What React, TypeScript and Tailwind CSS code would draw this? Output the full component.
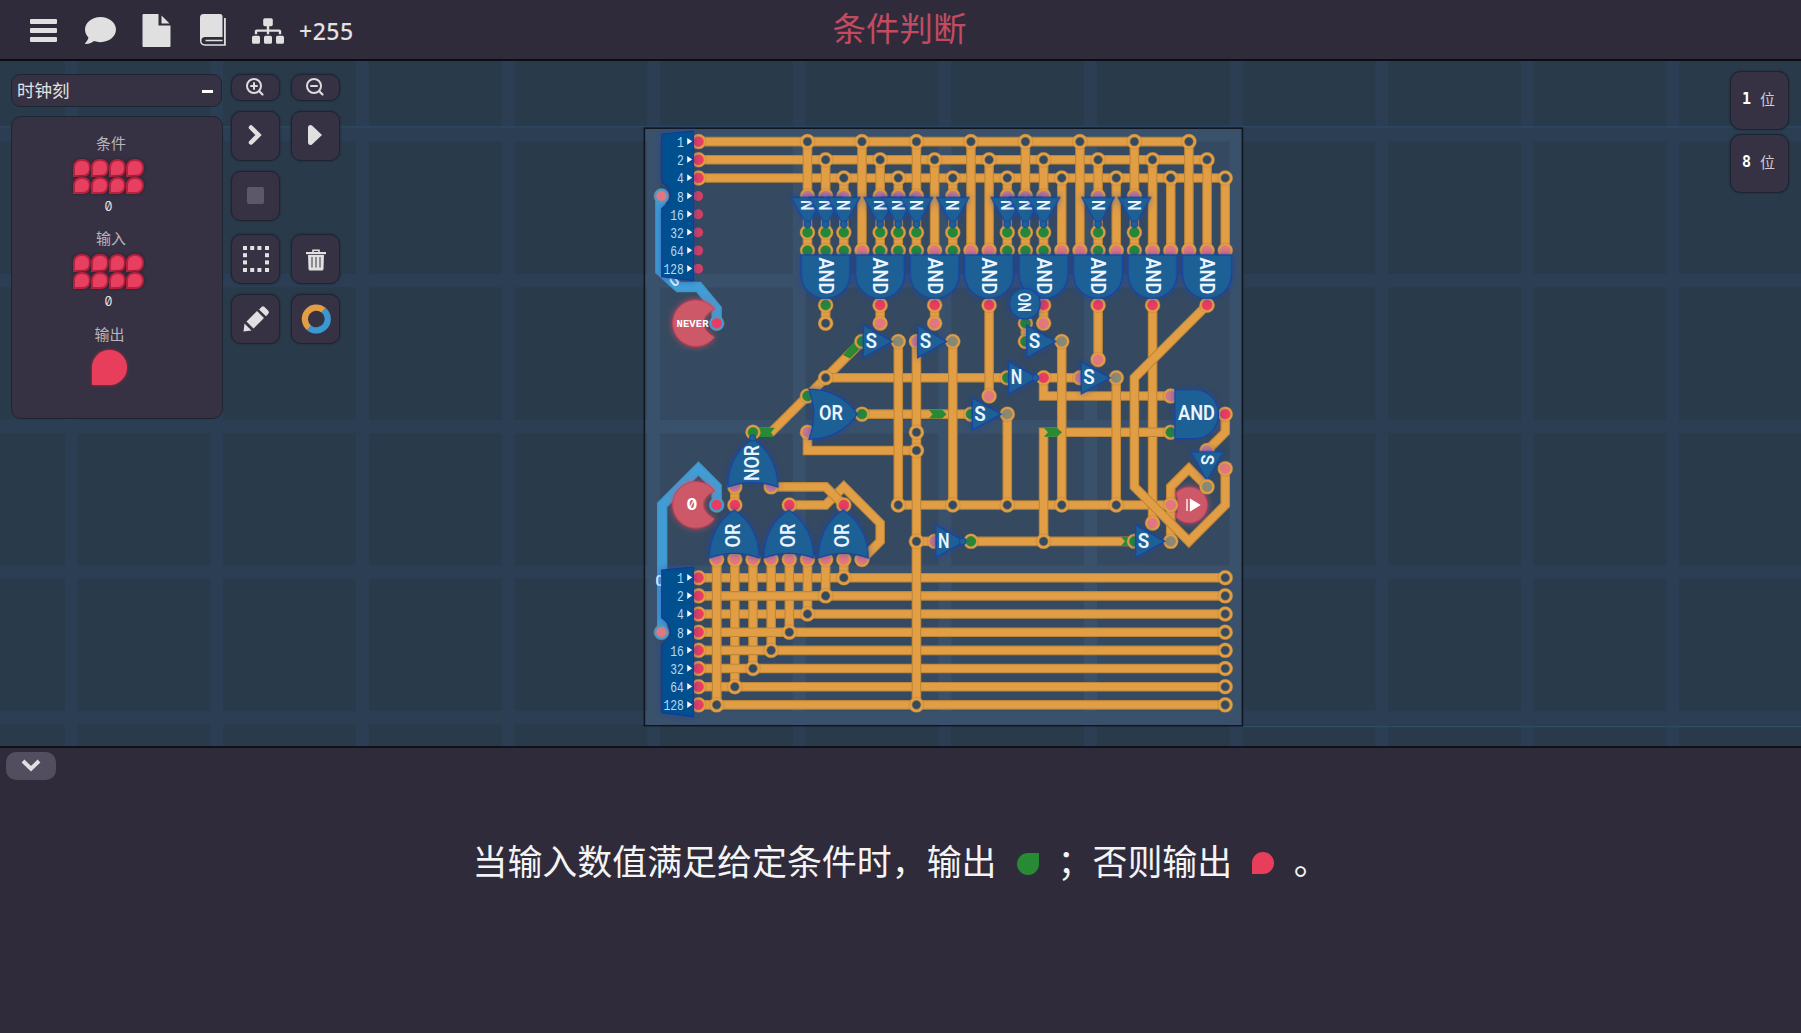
import React from "react";
import { FaComment, FaSitemap } from "react-icons/fa";

const X = (c: number) => 698.5 + 18.163 * c;
const Y = (r: number) => 141.6 + 18.17 * r;

type Pt = [number, number];
const pts = (p: Pt[]) => p.map(([c, r]) => `${X(c)},${Y(r)}`).join(" ");

function Wire({ p, blue }: { p: Pt[]; blue?: boolean }) {
  return (
    <g fill="none" strokeLinejoin="miter" strokeLinecap="butt">
      <polyline points={pts(p)} stroke={blue ? "#3f96cb" : "#bd8638"} strokeWidth={blue ? 10.4 : 9.6} />
      <polyline points={pts(p)} stroke={blue ? "#409dd5" : "#e29e45"} strokeWidth={7.4} />
    </g>
  );
}

const PIN: Record<string, string> = {
  red: "#e93c60",
  pink: "#e2777f",
  mauve: "#c87891",
  green: "#268738",
  gray: "#8a8a73",
  open: "#344a61",
};

function Pin({ c, r, k, ring = "#e29e45" }: { c: number; r: number; k: string; ring?: string }) {
  return (
    <g>
      <circle cx={X(c)} cy={Y(r)} r={7.5} fill={ring} stroke="#a87d40" strokeOpacity={0.55} strokeWidth={0.7} />
      <circle cx={X(c)} cy={Y(r)} r={k === "open" ? 4.3 : 4.9} fill={PIN[k]} stroke={k === "open" ? "#8a6a3a" : PIN[k]} strokeWidth={0.6} />
    </g>
  );
}

const GATE = { fill: "#1e6096", stroke: "#1846a0", strokeWidth: 1.3, filter: "url(#halo)" };

function Label({ x, y, s, rot = 0, size = 19.5, len }: { x: number; y: number; s: string; rot?: number; size?: number; len?: number }) {
  return (
    <text
      transform={`translate(${x} ${y}) rotate(${rot})`}
      textAnchor="middle"
      dy={size * 0.355}
      fontSize={size}
      textLength={len}
      lengthAdjust="spacingAndGlyphs"
      className="fill-[#e9f4ff] font-['Roboto',sans-serif] font-semibold"
    >
      {s}
    </text>
  );
}

function Tri({ c, r, s, down }: { c: number; r: number; s: "S" | "N"; down?: boolean }) {
  return (
    <g>
      <g transform={`translate(${X(c)} ${Y(r)}) rotate(${down ? 90 : 0})`}>
        <path d="M-16.8 -16.2 L12 0 L-16.8 16.2 Z" {...GATE} />
        {s === "N" && <circle cx="10" cy="0" r="3.4" fill="#1e6096" stroke="#1846a0" />}
      </g>
      <Label x={down ? X(c) : X(c) - 9} y={down ? Y(r) - 9 : Y(r) - 0.7} s={s} rot={down ? 90 : 0} size={down ? 18 : 20} len={down ? 10.5 : 11.5} />
    </g>
  );
}

function And({ c, r, down }: { c: number; r: number; down?: boolean }) {
  return (
    <g>
      <path
        transform={`translate(${X(c)} ${Y(r)}) rotate(${down ? 90 : 0})`}
        d="M-23 -24.5 H-4 C12 -24.5 20.5 -12 20.5 0 C20.5 12 12 24.5 -4 24.5 H-23 Z"
        {...GATE}
      />
      <Label x={down ? X(c) : X(c) - 1.5} y={Y(r) - (down ? 2 : 0.7)} s="AND" rot={down ? 90 : 0} len={37} />
    </g>
  );
}

function Or({ x, y, s, rot = 0 }: { x: number; y: number; s: string; rot?: number }) {
  return (
    <g>
      <g transform={`translate(${x} ${y}) rotate(${rot})`}>
        <path d="M-24 -25 C-4 -25 14 -16 24 0 C14 16 -4 25 -24 25 C-18 9 -18 -9 -24 -25 Z" {...GATE} />
        {s === "NOR" && <circle cx="25" cy="0" r="3.2" fill="#1e6096" stroke="#1846a0" />}
      </g>
      <Label x={x - (rot ? 0.8 : 2)} y={y + (rot ? (s === "NOR" ? 0 : 1.5) : -0.7)} s={s} rot={rot} len={s === "NOR" ? 36 : 24} />
    </g>
  );
}

/** Byte splitter: one blue input on the left, eight bit outputs on the right. */
function Splitter({ row }: { row: number }) {
  const y = Y(row);
  return (
    <g>
      <path
        d={`M661.8 ${y - 7.5} L693.3 ${y - 10.5} V${y + 139} L661.8 ${y + 135} V${y + 67} Q670.5 ${y + 61} 670.5 ${y + 54} Q670.5 ${y + 46} 661.8 ${y + 40} Z`}
        fill="#05508f"
        stroke="#0c3d93"
        strokeWidth="1.3"
        filter="url(#halo)"
      />
      {[1, 2, 4, 8, 16, 32, 64, 128].map((n, i) => (
        <g key={n}>
          <text
            x="683.8"
            y={Y(row + i) + 5.4}
            textAnchor="end"
            fontSize="14"
            textLength={String(n).length * 6.8}
            lengthAdjust="spacingAndGlyphs"
            className="fill-[#b9d8f2] font-['Liberation_Mono',monospace]"
          >
            {n}
          </text>
          <path d={`M687.2 ${Y(row + i) - 3.7} l5 3.4 l-5 3.4 Z`} fill="#f2f7fc" />
        </g>
      ))}
    </g>
  );
}

function Source({ row, label }: { row: number; label: string }) {
  const y = Y(row) - 0.6;
  return (
    <g>
      <path
        d={`M714.5 ${y - 13.5} A23.3 23.3 0 1 0 714.5 ${y + 14.5} Q703.5 ${y + 8} 703.5 ${y} Q703.5 ${y - 8} 714.5 ${y - 13.5} Z`}
        fill="#cd5868"
        stroke="#c33f56"
        strokeWidth="1"
        filter="url(#glow)"
      />
      {label === "0" ? (
        <text x="692" y={y + 6} textAnchor="middle" fontSize="16" className="fill-white font-['Inter',sans-serif] font-bold [font-feature-settings:'zero']">
          0
        </text>
      ) : (
        <text x="692.5" y={y + 4} textAnchor="middle" fontSize="10.5" textLength="32" className="fill-white font-['Liberation_Mono',monospace] font-bold">
          {label}
        </text>
      )}
      <Pin c={1} r={row} k="red" ring="#409dd5" />
    </g>
  );
}

const ANDS = [7, 10, 13, 16, 19, 22, 25, 28];
const INVERTED = [6, 7, 8, 10, 11, 12, 14, 17, 18, 19, 22, 24];
const SWITCHES: Pt[] = [[10, 11], [13, 11], [19, 11], [22, 13], [16, 15], [25, 22]];
const SWITCH_IN = ["green", "mauve", "green", "mauve", "green", "green"];

const WIRES: Pt[][] = [
  [[3, 16], [4, 16], [7, 13], [9, 11]],
  [[7, 9], [7, 10]],
  [[10, 9], [10, 10]],
  [[13, 9], [13, 10]],
  [[19, 9], [19, 10]],
  [[18, 10], [18, 11]],
  [[7, 13], [17, 13]],
  [[16, 9], [16, 14]],
  [[22, 9], [22, 12]],
  [[9, 15], [15, 15]],
  [[6, 16], [6, 17], [12, 17]],
  [[19, 13], [21, 13]],
  [[19, 13], [19, 14], [26, 14]],
  [[11, 20], [26, 20]],
  [[15, 22], [24, 22]],
  [[25, 9], [25, 21]],
  [[19, 22], [19, 16], [26, 16]],
  [[11, 11], [11, 20]],
  [[14, 11], [14, 20]],
  [[20, 11], [20, 20]],
  [[23, 13], [23, 20]],
  [[17, 15], [17, 20]],
  [[12, 22], [13, 22]],
  [[26, 22], [26, 19], [27, 18], [28, 19]],
  [[28, 9], [24, 13], [24, 19], [27, 22], [29, 20], [29, 18]],
  [[29, 15], [29, 16], [28, 17]],
  [[2, 19], [2, 20]],
  [[5, 20], [7, 20], [8, 19], [10, 21], [10, 22], [9, 23]],
  [[4, 19], [7, 19], [8, 20]],
];

function GridLines({ fill }: { fill: string }) {
  return (
    <g fill={fill}>
      {Array.from({ length: 12 }, (_, i) => (
        <rect key={i} x={64.8 + i * 145.6} y="61" width="13" height="686" />
      ))}
      {[128, 274, 420, 565.3, 711].map((y) => (
        <rect key={y} x="0" y={y} width="1801" height="13.5" />
      ))}
    </g>
  );
}

function Circuit() {
  return (
    <svg className="absolute inset-0 h-full w-full" viewBox="0 61 1801 685" preserveAspectRatio="none">
      <defs>
        <filter id="halo" x="-40%" y="-40%" width="180%" height="180%">
          <feDropShadow dx="0" dy="0" stdDeviation="3" floodColor="#1f3aa8" floodOpacity="0.6" />
        </filter>
        <filter id="glow" x="-40%" y="-40%" width="180%" height="180%">
          <feDropShadow dx="0" dy="0" stdDeviation="3.2" floodColor="#e04a60" floodOpacity="0.75" />
        </filter>
        <clipPath id="board">
          <rect x="644" y="128" width="598" height="599" />
        </clipPath>
      </defs>
      <GridLines fill="#2b3e53" />
      <path d="M0 126.8 H1801 M1243 726.5 H1801" stroke="#304b66" strokeWidth="1.3" />
      <g clipPath="url(#board)">
        <rect x="644" y="128" width="598" height="599" fill="#354a60" />
        <GridLines fill="#3a516c" />
      </g>
      <rect x="644.4" y="128.2" width="598" height="597.6" fill="none" stroke="#10161f" strokeWidth="1.6" />

      {[0, 1, 2].map((r) => (
        <Wire key={r} p={[[0, r], [27 + r, r]]} />
      ))}
      {ANDS.flatMap((c) => [-1, 0, 1].map((d) => <Wire key={`${c}${d}`} p={[[c + d, d + 1], [c + d, 6]]} />))}
      {WIRES.map((p, i) => (
        <Wire key={i} p={p} />
      ))}
      {[24, 26, 31].map((r) => (
        <Wire key={r} p={[[0, r], [29, r]]} />
      ))}
      {Array.from({ length: 8 }, (_, i) => (
        <Wire key={i} p={[[i + 1, 23], [i + 1, 31 - i]]} />
      ))}
      {[25, 27, 28, 29, 30].map((r) => (
        <Wire key={r} p={[[0, r], [29, r]]} />
      ))}
      <Wire p={[[1, 23], [1, 31]]} />
      <Wire p={[[12, 11], [12, 31]]} />

      {/* Signal pulses travelling along the wires */}
      <g fill="#278a35">
        <path d={`M${X(3)} ${Y(16) - 4.6} H775 L771 ${Y(16)} L774 ${Y(16) + 4.6} H${X(3)} Z`} />
        <path d="M843 355 L850 358.5 L862 346.5 L856 339.5 Z" />
        <path d={`M929 ${Y(15) - 4.4} h13 l4.5 4.4 l-4.5 4.4 h-13 l3.5 -4.4 Z`} />
        <path d={`M1044 ${Y(16) - 4.4} h13 l5 4.4 l-5 4.4 h-13 l4 -4.4 Z`} />
        <path d={`M1121 ${Y(22) - 4.4} h9 v8.8 h-9 l4 -4.4 Z`} />
      </g>

      <Wire blue p={[[-2.1, 3], [-2.1, 7.1], [-1.1, 8], [0, 8], [1, 9.2], [1, 10]]} />
      <Wire blue p={[[1, 20], [1, 19], [0, 18], [-2, 20], [-2, 27]]} />
      <Label x={674} y={281} s="0" size={14} rot={-40} />
      <Label x={659.5} y={581.5} s="0" size={14} />

      {ANDS.flatMap((c) =>
        [-1, 0, 1].map((d) => (
          <g key={`${c}${d}`}>
            <Pin c={c + d} r={d + 1} k="open" />
            <Pin c={c + d} r={6} k={INVERTED.includes(c + d) ? "green" : "pink"} />
            {INVERTED.includes(c + d) && <Pin c={c + d} r={3} k="mauve" />}
            {INVERTED.includes(c + d) && <Pin c={c + d} r={5} k="green" />}
          </g>
        )),
      )}
      {ANDS.map((c) => (
        <Pin key={c} c={c} r={9} k={c === 7 ? "green" : "red"} />
      ))}
      {([[7, 10], [7, 13], [12, 16], [12, 17], [12, 22], [12, 31], [11, 20], [14, 20], [17, 20], [20, 20], [23, 20], [19, 22]] as Pt[]).map(([c, r]) => (
        <Pin key={`${c}-${r}`} c={c} r={r} k="open" />
      ))}
      {Array.from({ length: 8 }, (_, i) => (
        <g key={i}>
          <Pin c={29} r={24 + i} k="open" />
          <Pin c={i + 1} r={31 - i} k="open" />
          <Pin c={0} r={24 + i} k="red" />
          {i < 3 ? <Pin c={0} r={i} k="red" /> : <circle cx={X(0) - 0.4} cy={Y(i)} r="5" fill="#cf4164" />}
        </g>
      ))}
      {Array.from({ length: 9 }, (_, i) => (
        <Pin key={i} c={i + 1} r={23} k="pink" />
      ))}
      {SWITCHES.map(([c, r], i) => (
        <g key={i}>
          <Pin c={c - 1} r={r} k={SWITCH_IN[i]} />
          <Pin c={c} r={r - 1} k="pink" />
          <Pin c={c + 1} r={r} k="gray" />
        </g>
      ))}
      <Pin c={28} r={17} k="mauve" />
      <Pin c={29} r={18} k="pink" />
      <Pin c={18} r={10} k="green" />
      <Pin c={3} r={16} k="green" />
      <Pin c={6} r={14} k="green" />
      <Pin c={6} r={16} k="mauve" />
      <Pin c={9} r={15} k="green" />
      <Pin c={17} r={13} k="green" />
      <Pin c={19} r={13} k="red" />
      <Pin c={26} r={14} k="mauve" />
      <Pin c={26} r={16} k="green" />
      <Pin c={29} r={15} k="red" />
      <Pin c={13} r={22} k="mauve" />
      <Pin c={15} r={22} k="green" />
      <Pin c={2} r={19} k="mauve" />
      <Pin c={4} r={19} k="mauve" />
      <Pin c={2} r={20} k="red" />
      <Pin c={5} r={20} k="red" />
      <Pin c={8} r={20} k="red" />

      <Splitter row={0} />
      <Splitter row={24} />
      <Pin c={-2.04} r={3} k="pink" ring="#409dd5" />
      <Pin c={-2.04} r={27} k="pink" ring="#409dd5" />
      <Source row={10} label="NEVER" />
      <Source row={20} label="0" />

      {INVERTED.map((c) => (
        <Tri key={c} c={c} r={4} s="N" down />
      ))}
      {ANDS.map((c) => (
        <And key={c} c={c} r={7.5} down />
      ))}
      <circle cx={X(18) - 0.6} cy={Y(9) - 1.5} r="15.3" {...GATE} />
      <Label x={X(18) - 0.6} y={Y(9) - 2.8} s="ON" rot={90} size={19} len={19} />
      {SWITCHES.map(([c, r]) => (
        <Tri key={`${c}-${r}`} c={c} r={r} s="S" />
      ))}
      <Tri c={18} r={13} s="N" />
      <Tri c={14} r={22} s="N" />
      <Tri c={28} r={18} s="S" down />
      <Or x={833} y={Y(15)} s="OR" />
      <And c={27.5} r={15} />
      <Or x={X(3) - 0.3} y={463} s="NOR" rot={-90} />
      {[2, 5, 8].map((c) => (
        <Or key={c} x={X(c) - 0.6} y={534} s="OR" rot={-90} />
      ))}

      {/* Output terminal */}
      <path
        d={`M1176 ${Y(20) - 12} A18 18 0 1 1 1176 ${Y(20) + 12} Q1180 ${Y(20)} 1176 ${Y(20) - 12} Z`}
        fill="#cd5868"
        stroke="#c33f56"
        filter="url(#glow)"
      />
      <path d={`M1187 ${Y(20) - 6} v12 M1190.5 ${Y(20) - 5.5} l9 5.5 l-9 5.5 Z`} fill="#fff" stroke="#fff" strokeWidth="1.3" />
      <Pin c={26} r={20} k="pink" />
      <Pin c={28} r={19} k="gray" />
    </svg>
  );
}

function LeafGrid() {
  return (
    <div className="grid grid-cols-4">
      {Array.from({ length: 8 }, (_, i) => (
        <div key={i} className="h-[17.6px] w-[17.6px] rounded-[8px] rounded-bl-none border-[2px] border-[#b5213e] bg-[#e73f5f] shadow-[0_0_3px_#2a1a28]" />
      ))}
    </div>
  );
}

function Channel({ name, className }: { name: string; className: string }) {
  return (
    <div className={`flex flex-col items-center ${className}`}>
      <div className="h-[24px] pl-[4px] text-[15px] leading-[24px] text-[#b9b5bd]">{name}</div>
      <div className="mt-[4px] -ml-px">
        <LeafGrid />
      </div>
      <div className="mt-[4px] -ml-px font-['Inter',sans-serif] text-[12.5px] leading-[18px] text-[#e4e2e6] [font-feature-settings:'zero']">0</div>
    </div>
  );
}

function Tool({ children, className }: { children?: React.ReactNode; className: string }) {
  return (
    <button className={`flex w-[49px] items-center justify-center rounded-[10px] border border-[#1d2531] bg-[#373243] shadow-[0_0_2px_#1b2430] ${className}`}>
      {children}
    </button>
  );
}

function ZoomGlyph({ plus }: { plus?: boolean }) {
  return (
    <svg width="20" height="20" viewBox="0 0 20 20" className="-mt-px -ml-[2px]" fill="none" stroke="#dcdbdd" strokeWidth="2" strokeLinecap="round">
      <circle cx="9" cy="9" r="7" />
      <path d="M14.3 14.3 L17.5 17.5" strokeWidth="2.2" />
      <path d={plus ? "M6 9 H12 M9 6 V12" : "M6 9 H12"} />
    </svg>
  );
}

function Leaf({ green }: { green?: boolean }) {
  return (
    <span
      className={
        green
          ? "mt-[3px] ml-[20px] mr-[19px] inline-block h-[22px] w-[22px] rounded-full rounded-tr-none bg-[#278a35]"
          : "mt-[2px] ml-[20px] mr-[19.5px] inline-block h-[22px] w-[22px] rounded-full rounded-bl-none bg-[#e93e5b]"
      }
    />
  );
}

export default function App() {
  return (
    <div className="flex h-[1033px] w-[1801px] flex-col overflow-hidden bg-[#2f2b3b] font-['Noto_Sans','Noto_Sans_CJK_SC',sans-serif] text-[#e2e2e2]">
      <header className="grid h-[61px] shrink-0 grid-cols-3 items-center border-b-2 border-[#0c0c14]">
        <div className="flex items-center pl-[30px]">
          <svg width="27" height="24" viewBox="0 0 27 24" className="mt-[3px]" fill="#e0e0e0">
            <rect y="0" width="27" height="5" rx="1" />
            <rect y="9" width="27" height="5" rx="1" />
            <rect y="18" width="27" height="5" rx="1" />
          </svg>
          <FaComment className="mt-px ml-[28px] h-[31px] w-[31px] text-[#e0e0e0]" />
          <svg width="29" height="34" viewBox="0 0 29 34" className="ml-[26px] mt-[3px]" fill="#e0e0e0">
            <path d="M1 0 H16.5 V11.5 H28.5 V32 q0 1 -1 1 H1.5 q-1 0 -1 -1 V1 q0 -1 1 -1 Z M19.5 1.5 L27.5 9.5 H19.5 Z" />
          </svg>
          <svg width="27" height="33" viewBox="0 0 27 33" className="ml-[29px] mt-[2px]" fill="#e0e0e0">
            <path d="M3.5 0 H20 q2.5 0 2.5 2.5 V23 H5 q-3 0 -3.5 2.5 q-.6 4.7 3.5 4.7 H24 V4 h1.8 V31.8 H5 Q0 31.5 0 26.5 V3.5 Q0 0 3.5 0 Z" />
            <path d="M5.5 26.5 H22.5" fill="none" stroke="#e0e0e0" strokeWidth="1.5" />
          </svg>
          <FaSitemap className="ml-[25px] mt-[3px] h-[32px] w-[32px] text-[#e0e0e0]" />
          <span className="ml-[15px] mt-[4px] text-[23px] leading-none font-medium tracking-[0.5px]">+255</span>
        </div>
        <h1 className="-mt-[4px] -ml-[2px] text-center text-[33.5px] leading-[50px] font-normal text-[#c34b60]">条件判断</h1>
      </header>

      <main className="relative flex h-[685px] shrink-0 justify-between bg-[#293a4b]">
        <Circuit />
        <div className="relative flex pl-[11px] pt-[13px]">
          <div className="flex flex-col">
            <div className="flex h-[33px] w-[211px] items-center justify-between rounded-[9px] border border-[#1d2531] bg-[#373243] pr-[8px] pl-[5px]">
              <span className="mt-px text-[17.5px] leading-none">时钟刻</span>
              <span className="mt-px h-[3px] w-[11px] bg-white" />
            </div>
            <div className="mt-[9px] flex h-[303px] w-[212px] flex-col items-center rounded-[10px] border border-[#1d2531] bg-[#373243] pr-[16px]">
              <Channel name="条件" className="mt-[14px]" />
              <Channel name="输入" className="mt-[10px]" />
              <div className="mt-[11px] h-[24px] pl-[1px] text-[15px] leading-[24px] text-[#b9b5bd]">输出</div>
              <div className="mt-[4px] h-[35px] w-[35px] rounded-full rounded-bl-none bg-[#e93e5b] shadow-[0_0_3px_#c22f4b]" />
            </div>
          </div>
          <div className="ml-[8px] grid grid-cols-[49px_49px] content-start gap-x-[11px]">
            <Tool className="h-[27px]"><ZoomGlyph plus /></Tool>
            <Tool className="h-[27px]"><ZoomGlyph /></Tool>
            <Tool className="mt-[10px] h-[50px]">
              <svg width="16" height="22" viewBox="0 0 16 22" className="-mt-[2px] -ml-[2px]" fill="none" stroke="#e0e0e0" strokeWidth="4.5" strokeLinecap="round"><path d="M4 3.5 L11.5 11 L4 18.5" /></svg>
            </Tool>
            <Tool className="mt-[10px] h-[50px]">
              <svg width="16" height="22" viewBox="0 0 16 22" className="-mt-[2px] -ml-[2px]" fill="#e0e0e0"><path d="M1 3 Q2 0 5 1.5 L15 11 L5 20.5 Q2 22 1 19 Z" /></svg>
            </Tool>
            <Tool className="mt-[10px] h-[50px]"><span className="-mt-[2px] h-[17px] w-[17px] rounded-[2px] bg-[#5c5868]" /></Tool>
            <span />
            <Tool className="mt-[13px] h-[50px]">
              <svg width="26" height="26" viewBox="0 0 26 26" fill="#e2e2e2">
                {[0, 7.2, 14.4, 22].map((a) => (
                  <g key={a}>
                    <rect x={a} y="0" width="4" height="4" />
                    <rect x={a} y="22" width="4" height="4" />
                    <rect x="0" y={a} width="4" height="4" />
                    <rect x="22" y={a} width="4" height="4" />
                  </g>
                ))}
              </svg>
            </Tool>
            <Tool className="mt-[13px] h-[50px]">
              <svg width="20" height="22" viewBox="0 0 20 22" className="mt-[2px]">
                <path d="M7 3.5 V1.2 H13 V3.5" fill="none" stroke="#e0e0e0" strokeWidth="1.6" />
                <rect x="0" y="3" width="20" height="2.2" fill="#e0e0e0" />
                <path d="M2 6 H18 L17.5 20 q-.2 1.5 -1.5 1.5 H4 q-1.3 0 -1.500 -1.500 Z" fill="#e0e0e0" />
                <path d="M6 8 V18.5 M10 8 V18.5 M14 8 V18.5" stroke="#55505f" strokeWidth="1.2" />
              </svg>
            </Tool>
            <Tool className="mt-[10px] h-[50px]">
              <svg width="28" height="28" viewBox="0 0 28 28" fill="#e0e0e0">
                <path d="M2.5 18.5 L9.5 25.5 L1.5 26.5 Z M4.5 16.5 L15 6 L22 13 L11.500 23.500 Z M17 4.500 L19.500 2 q1.500 -1.500 3 0 L26.300 5.800 q1.200 1.500 0 3 L24 11.200 Z" />
              </svg>
            </Tool>
            <Tool className="mt-[10px] h-[50px]">
              <svg width="30" height="30" viewBox="0 0 30 30" fill="none" strokeWidth="6.2">
                <path d="M22.6 6.2 A11.2 11.2 0 0 1 8 23.8" stroke="#3b98d0" />
                <path d="M8 23.8 A11.2 11.2 0 0 1 22.6 6.2" stroke="#e29e45" />
              </svg>
            </Tool>
          </div>
        </div>
        <div className="relative flex flex-col gap-[4px] pt-[10px] pr-[12px]">
          {["1", "8"].map((n) => (
            <button key={n} className="flex h-[59px] w-[59px] items-center justify-center gap-[9px] rounded-[11px] border border-[#1d2531] bg-[#373243] pr-[2px] pb-[2px] text-[15px] text-[#cfccd2] shadow-[0_0_2px_#1b2430]">
              <b className="font-['DejaVu_Sans_Mono',monospace] text-[15px] text-white">{n}</b>
              <span>位</span>
            </button>
          ))}
        </div>
      </main>

      <footer className="flex flex-1 flex-col rounded-bl-[4px] border-t-2 border-[#0e131b] bg-[#2f2b3b]">
        <button className="mt-[4px] ml-[6px] flex h-[28px] w-[50px] items-center justify-center rounded-[10px] bg-[#524e60]">
          <svg width="20" height="14" viewBox="0 0 20 14" fill="none" stroke="#e0e0e0" strokeWidth="4"><path d="M2 2 L10 9.8 L18 2" /></svg>
        </button>
        <p className="mt-[56px] flex h-[52px] items-center pl-[472.5px] text-[34.95px] leading-[52px] whitespace-nowrap text-[#f4f4f4]">
          <span>当输入数值满足给定条件时，输出</span>
          <Leaf green />
          <span>；否则输出</span>
          <Leaf />
          <span>。</span>
        </p>
      </footer>
    </div>
  );
}
